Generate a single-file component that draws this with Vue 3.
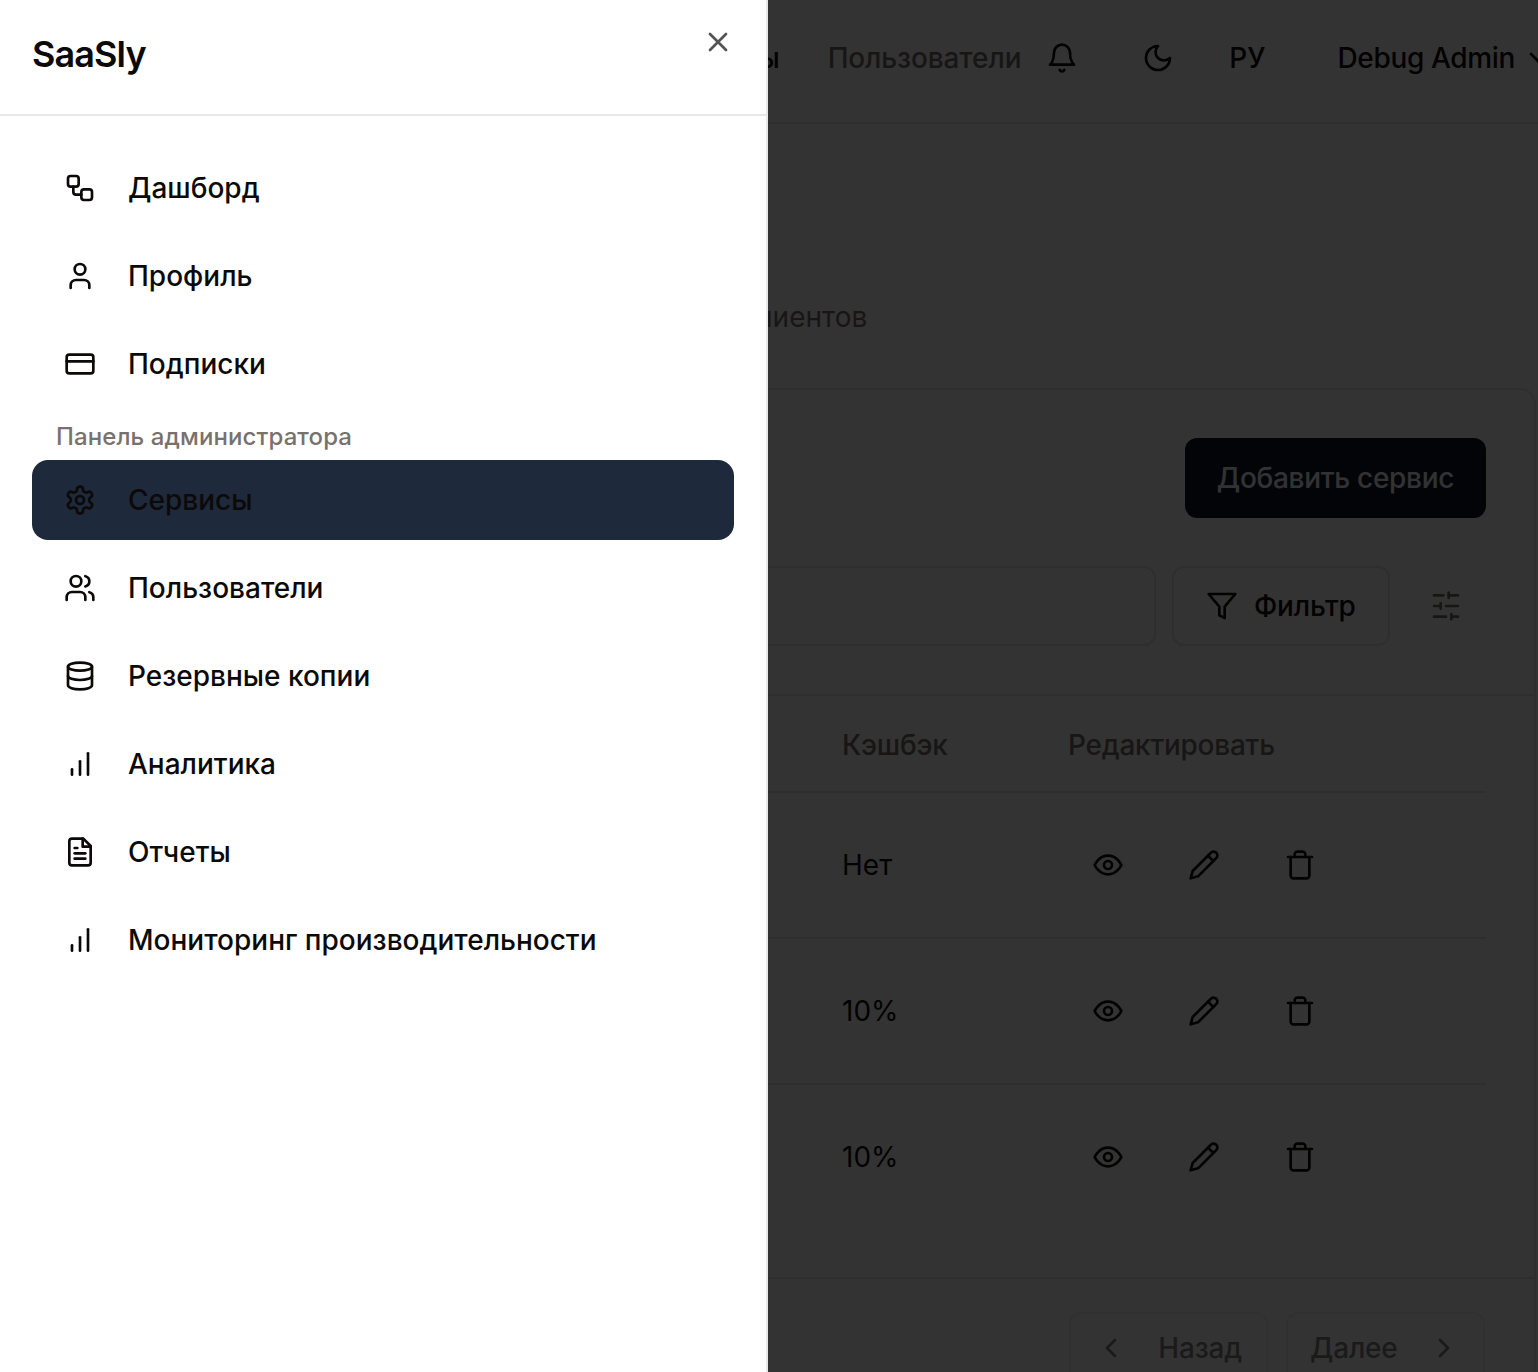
<script setup>
const topItems = [
  { label: 'Дашборд', icon: 'workflow' },
  { label: 'Профиль', icon: 'user' },
  { label: 'Подписки', icon: 'card' },
];
const adminItems = [
  { label: 'Сервисы', icon: 'settings', active: true },
  { label: 'Пользователи', icon: 'users' },
  { label: 'Резервные копии', icon: 'database' },
  { label: 'Аналитика', icon: 'chart' },
  { label: 'Отчеты', icon: 'file' },
  { label: 'Мониторинг производительности', icon: 'chart' },
];
const rows = ['Нет', '10%', '10%'];

const icons = {
  workflow: '<rect x="3" y="3" width="8" height="8" rx="2"/><path d="M7 11v4a2 2 0 0 0 2 2h4"/><rect x="13" y="13" width="8" height="8" rx="2"/>',
  user: '<path d="M19 21v-2a4 4 0 0 0-4-4H9a4 4 0 0 0-4 4v2"/><circle cx="12" cy="7" r="4"/>',
  card: '<rect x="2" y="5" width="20" height="14" rx="2"/><path d="M2 10h20"/>',
  settings: '<path d="M12.22 2h-.44a2 2 0 0 0-2 2v.18a2 2 0 0 1-1 1.73l-.43.25a2 2 0 0 1-2 0l-.15-.08a2 2 0 0 0-2.73.73l-.22.38a2 2 0 0 0 .73 2.73l.15.1a2 2 0 0 1 1 1.72v.51a2 2 0 0 1-1 1.74l-.15.09a2 2 0 0 0-.73 2.73l.22.38a2 2 0 0 0 2.73.73l.15-.08a2 2 0 0 1 2 0l.43.25a2 2 0 0 1 1 1.73V20a2 2 0 0 0 2 2h.44a2 2 0 0 0 2-2v-.18a2 2 0 0 1 1-1.73l.43-.25a2 2 0 0 1 2 0l.15.08a2 2 0 0 0 2.73-.73l.22-.39a2 2 0 0 0-.73-2.73l-.15-.08a2 2 0 0 1-1-1.74v-.5a2 2 0 0 1 1-1.74l.15-.09a2 2 0 0 0 .73-2.73l-.22-.38a2 2 0 0 0-2.73-.73l-.15.08a2 2 0 0 1-2 0l-.43-.25a2 2 0 0 1-1-1.73V4a2 2 0 0 0-2-2z"/><circle cx="12" cy="12" r="3"/>',
  users: '<path d="M16 21v-2a4 4 0 0 0-4-4H6a4 4 0 0 0-4 4v2"/><circle cx="9" cy="7" r="4"/><path d="M22 21v-2a4 4 0 0 0-3-3.87"/><path d="M16 3.13a4 4 0 0 1 0 7.75"/>',
  database: '<ellipse cx="12" cy="5" rx="9" ry="3"/><path d="M3 5v14a9 3 0 0 0 18 0V5"/><path d="M3 12a9 3 0 0 0 18 0"/>',
  chart: '<path d="M12 20V10"/><path d="M18 20V4"/><path d="M6 20v-4"/>',
  file: '<path d="M14.5 2H6a2 2 0 0 0-2 2v16a2 2 0 0 0 2 2h12a2 2 0 0 0 2-2V7.5L14.5 2z"/><path d="M14 2v6h6"/><path d="M16 13H8"/><path d="M16 17H8"/><path d="M10 9H8"/>',
  x: '<path d="M18 6 6 18"/><path d="m6 6 12 12"/>',
  bell: '<path d="M6 8a6 6 0 0 1 12 0c0 7 3 9 3 9H3s3-2 3-9"/><path d="M10.3 21a1.94 1.94 0 0 0 3.4 0"/>',
  moon: '<path d="M12 3a6 6 0 0 0 9 9 9 9 0 1 1-9-9Z"/>',
  chevronDown: '<path d="m6 9 6 6 6-6"/>',
  chevronLeft: '<path d="m15 18-6-6 6-6"/>',
  chevronRight: '<path d="m9 18 6-6-6-6"/>',
  filter: '<path d="M22 3H2l8 9.46V19l4 2v-8.54L22 3z"/>',
  sliders: '<path d="M21 4h-7"/><path d="M10 4H3"/><path d="M21 12h-9"/><path d="M8 12H3"/><path d="M21 20h-5"/><path d="M12 20H3"/><path d="M14 2v4"/><path d="M8 10v4"/><path d="M16 18v4"/>',
  eye: '<path d="M2 12s3-7 10-7 10 7 10 7-3 7-10 7-10-7-10-7Z"/><circle cx="12" cy="12" r="3"/>',
  pencil: '<path d="M17 3a2.85 2.83 0 1 1 4 4L7.5 20.5 2 22l1.5-5.5Z"/><path d="m15 5 4 4"/>',
  trash: '<path d="M3 6h18"/><path d="M19 6v14c0 1-1 2-2 2H7c-1 0-2-1-2-2V6"/><path d="M8 6V4c0-1 1-2 2-2h4c1 0 2 1 2 2v2"/>',
};
</script>

<template>
  <div class="page">
    <header class="topbar">
      <nav class="topnav">
        <span class="topnav-link strong">Сервисы</span>
        <span class="topnav-link">Пользователи</span>
      </nav>
      <svg class="icon bell" viewBox="0 0 24 24" v-html="icons.bell" />
      <svg class="icon moon" viewBox="0 0 24 24" v-html="icons.moon" />
      <span class="lang">РУ</span>
      <span class="account">Debug Admin</span>
      <svg class="icon chevron" viewBox="0 0 24 24" v-html="icons.chevronDown" />
    </header>

    <main class="main">
      <p class="subtitle">Управляйте сервисами, доступными для ваших клиентов</p>

      <section class="card">
        <div class="card-actions">
          <button class="btn-primary">Добавить сервис</button>
        </div>

        <div class="toolbar">
          <div class="search" />
          <button class="btn-outline">
            <svg class="icon" viewBox="0 0 24 24" v-html="icons.filter" />
            Фильтр
          </button>
          <button class="btn-ghost">
            <svg class="icon" viewBox="0 0 24 24" v-html="icons.sliders" />
          </button>
        </div>

        <div class="table">
          <div class="table-row head">
            <div />
            <div class="cell">Кэшбэк</div>
            <div class="cell">Редактировать</div>
          </div>
          <div v-for="(value, i) in rows" :key="i" class="table-row body">
            <div />
            <div class="cell">{{ value }}</div>
            <div class="cell actions">
              <button class="action"><svg class="icon" viewBox="0 0 24 24" v-html="icons.eye" /></button>
              <button class="action"><svg class="icon" viewBox="0 0 24 24" v-html="icons.pencil" /></button>
              <button class="action"><svg class="icon" viewBox="0 0 24 24" v-html="icons.trash" /></button>
            </div>
          </div>
        </div>

        <div class="pager">
          <button class="btn-page">
            <svg class="icon" viewBox="0 0 24 24" v-html="icons.chevronLeft" />
            Назад
          </button>
          <button class="btn-page next">
            Далее
            <svg class="icon" viewBox="0 0 24 24" v-html="icons.chevronRight" />
          </button>
        </div>
      </section>
    </main>

    <div class="overlay" />

    <aside class="sheet">
      <div class="sheet-head">SaaSly</div>
      <button class="sheet-close">
        <svg class="icon" viewBox="0 0 24 24" v-html="icons.x" />
      </button>
      <nav class="menu">
        <a v-for="item in topItems" :key="item.label" class="menu-item">
          <svg class="icon" viewBox="0 0 24 24" v-html="icons[item.icon]" />
          {{ item.label }}
        </a>
        <div class="menu-label">Панель администратора</div>
        <a
          v-for="item in adminItems"
          :key="item.label"
          class="menu-item"
          :class="{ active: item.active }"
        >
          <svg class="icon" viewBox="0 0 24 24" v-html="icons[item.icon]" />
          {{ item.label }}
        </a>
      </nav>
    </aside>
  </div>
</template>

<style>
html,
body {
  margin: 0;
  overflow: hidden;
}
</style>

<style scoped>
.page {
  position: relative;
  width: 1538px;
  height: 100vh;
  overflow: hidden;
  background: #fff;
  color: #0c0a09;
  font-family: Inter, "Liberation Sans", sans-serif;
  font-size: 28px;
  line-height: 40px;
}
.icon {
  display: block;
  flex: none;
  width: 32px;
  height: 32px;
  fill: none;
  stroke: currentColor;
  stroke-width: 2;
  stroke-linecap: round;
  stroke-linejoin: round;
}
button {
  font: inherit;
  color: inherit;
  background: none;
  border: 0;
  padding: 0;
}

.topbar {
  box-sizing: border-box;
  display: flex;
  justify-content: flex-end;
  align-items: center;
  width: 1555px;
  height: 124px;
  padding-bottom: 6px;
  border-bottom: 2px solid #e7e5e4;
  font-weight: 500;
}
.topnav {
  display: flex;
  gap: 48px;
  margin-right: 25px;
}
.topnav-link {
  color: #78716c;
  letter-spacing: -0.15px;
}
.topnav-link.strong {
  color: #0c0a09;
}
.bell {
  margin-right: 64px;
}
.moon {
  margin-right: 55px;
}
.lang {
  margin-right: 72px;
}
.account {
  letter-spacing: -0.35px;
}
.chevron {
  margin-left: 8px;
}

.main {
  padding: 173px 2px 0 76px;
}
.subtitle {
  margin: 0 0 51px;
  color: #78716c;
}

.card {
  margin-left: -44px;
  border: 2px solid #e7e5e4;
  border-radius: 16px;
}
.card-actions {
  display: flex;
  justify-content: flex-end;
  padding: 48px 48px 0;
}
.btn-primary {
  height: 80px;
  width: 301px;
  border-radius: 12px;
  background: #0f172a;
  color: #f8fafc;
  font-weight: 500;
  letter-spacing: -0.3px;
}
.toolbar {
  display: flex;
  gap: 16px;
  padding: 48px 48px;
  border-bottom: 2px solid #e7e5e4;
}
.search {
  flex: 1;
  height: 76px;
  border: 2px solid #e7e5e4;
  border-radius: 12px;
}
.btn-outline {
  display: flex;
  align-items: center;
  gap: 16px;
  box-sizing: border-box;
  height: 80px;
  width: 218px;
  padding: 0 32px;
  border: 2px solid #e7e5e4;
  border-radius: 12px;
  font-weight: 500;
  letter-spacing: -0.2px;
}
.btn-ghost {
  display: flex;
  align-items: center;
  justify-content: center;
  width: 80px;
  height: 80px;
  color: #78716c;
}

.table {
  margin: 0 48px;
}
.table-row {
  display: grid;
  grid-template-columns: 744px 226px 1fr;
  align-items: center;
  box-sizing: border-box;
}
.table-row.head {
  height: 97px;
  padding-top: 2px;
  border-bottom: 2px solid #e7e5e4;
  color: #78716c;
  font-weight: 500;
  letter-spacing: -0.25px;
}
.table-row.body {
  height: 146px;
  border-bottom: 2px solid #e7e5e4;
}
.table-row.body:last-child {
  border-bottom-color: transparent;
}
.cell {
  padding: 0 16px;
}
.actions {
  display: flex;
  gap: 16px;
}
.action {
  display: flex;
  align-items: center;
  justify-content: center;
  width: 80px;
  height: 80px;
}

.pager {
  display: flex;
  justify-content: flex-end;
  gap: 18px;
  margin-top: 46px;
  padding: 33px 49px 0 48px;
  border-top: 2px solid #e7e5e4;
}
.btn-page {
  display: flex;
  align-items: center;
  justify-content: space-between;
  box-sizing: border-box;
  width: 199px;
  height: 70px;
  padding: 0 24px;
  border: 2px solid #e7e5e4;
  border-bottom: 0;
  border-radius: 12px 12px 0 0;
  font-weight: 500;
  letter-spacing: -0.2px;
  opacity: 0.5;
}
.btn-page.next {
  padding: 0 23px 0 22px;
}

.overlay {
  position: absolute;
  inset: 0;
  background: rgba(0, 0, 0, 0.8);
}

.sheet {
  position: absolute;
  top: 0;
  bottom: 0;
  left: 0;
  box-sizing: border-box;
  width: 768px;
  border-right: 2px solid #e5e7eb;
  background: #fff;
}
.sheet-head {
  box-sizing: border-box;
  height: 116px;
  padding: 32px 32px 0;
  border-bottom: 2px solid #e5e7eb;
  color: #0c0a09;
  font-size: 36px;
  font-weight: 600;
  line-height: 44px;
  letter-spacing: -0.9px;
}
.sheet-close {
  position: absolute;
  top: 26px;
  right: 32px;
  opacity: 0.7;
}
.menu {
  display: flex;
  flex-direction: column;
  gap: 8px;
  padding: 32px 32px 0;
}
.menu-item {
  display: flex;
  align-items: center;
  gap: 32px;
  height: 80px;
  padding: 0 32px;
  border-radius: 16px;
  font-weight: 500;
}
.menu-item.active {
  background: #1e293b;
}
.menu-label {
  height: 30px;
  padding: 10px 24px 0;
  color: #78716c;
  font-size: 24px;
  font-weight: 500;
  line-height: 30px;
  letter-spacing: 0.1px;
}
</style>
